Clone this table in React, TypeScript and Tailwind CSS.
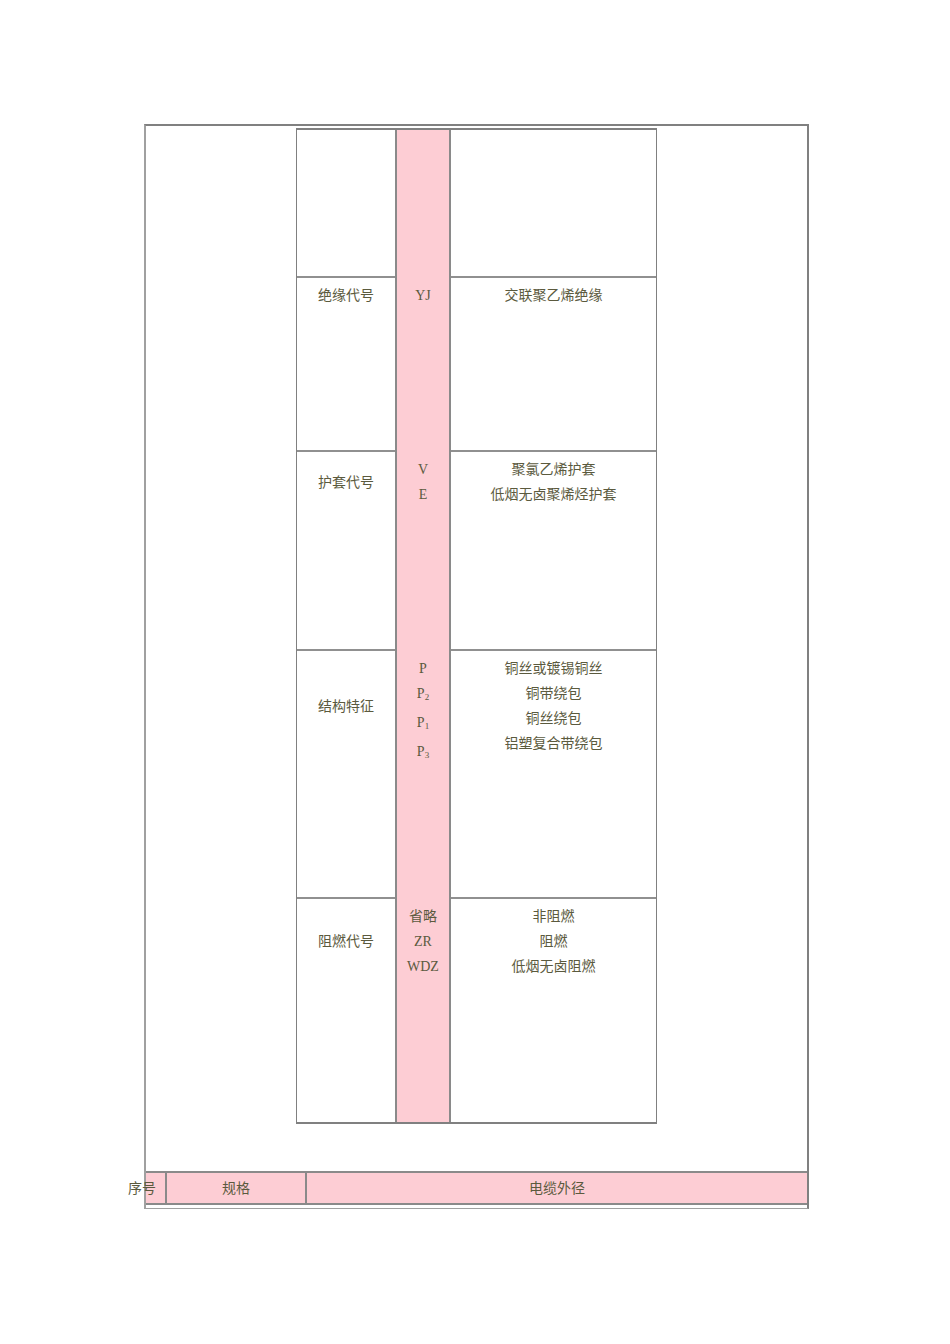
import React from "react";

const txt = "text-[#5b5a3e] text-[14px] leading-[25px]";
const font = { fontFamily: '"Liberation Serif", "Noto Sans CJK SC", serif' };

function Sub({ base, sub }: { base: string; sub: string }) {
  return (
    <span>
      {base}
      <span className="text-[9px] align-[-2px]">{sub}</span>
    </span>
  );
}

type Row = {
  h: string;
  label?: string;
  codes: React.ReactNode[];
  desc: string[];
  first?: boolean;
};

const rows: Row[] = [
  { h: "h-[146px]", codes: [], desc: [], first: true },
  { h: "h-[174px]", label: "绝缘代号", codes: ["YJ"], desc: ["交联聚乙烯绝缘"] },
  { h: "h-[199px]", label: "护套代号", codes: ["V", "E"], desc: ["聚氯乙烯护套", "低烟无卤聚烯烃护套"] },
  {
    h: "h-[248px]",
    label: "结构特征",
    codes: ["P", <Sub key="p2" base="P" sub="2" />, <Sub key="p1" base="P" sub="1" />, <Sub key="p3" base="P" sub="3" />],
    desc: ["铜丝或镀锡铜丝", "铜带绕包", "铜丝绕包", "铝塑复合带绕包"],
  },
  { h: "h-[225px]", label: "阻燃代号", codes: ["省略", "ZR", "WDZ"], desc: ["非阻燃", "阻燃", "低烟无卤阻燃"] },
];

export default function App() {
  return (
    <div className="w-[950px] h-[1344px] bg-white" style={font}>
      <div className="pt-[124px] pl-[144px]">
        <div className="w-[665px] h-[1085px] border-t-2 border-l-2 border-r-2 border-b border-t-[#808080] border-l-[#a0a0a0] border-r-[#808080] border-b-[#a0a0a0] flex flex-col">
          <div className="ml-[150px] mt-[2px] w-[361px] border border-[#808080] border-t-2 border-b-2 flex flex-col">
            {rows.map((r, i) => {
              const n = Math.max(r.codes.length, r.desc.length, 1);
              return (
                <div key={i} className={`flex ${r.h}`}>
                  <div className={`w-[98px] ${r.first ? "" : "border-t-2 border-[#909090]"} pt-[5px]`}>
                    {r.label && (
                      <div className={`flex items-center justify-center ${txt}`} style={{ height: n * 25 }}>
                        {r.label}
                      </div>
                    )}
                  </div>
                  <div className="w-[56px] bg-[#fdcdd4] border-l-2 border-r-2 border-[#8a8a8a] pt-[7px] flex flex-col items-center">
                    {r.codes.map((c, j) => (
                      <div key={j} className={txt}>
                        {c}
                      </div>
                    ))}
                  </div>
                  <div className={`flex-1 ${r.first ? "" : "border-t-2 border-[#909090]"} pt-[5px] flex flex-col items-center`}>
                    {r.desc.map((d, j) => (
                      <div key={j} className={txt}>
                        {d}
                      </div>
                    ))}
                  </div>
                </div>
              );
            })}
          </div>
          <div className="mt-[47px] h-[34px] bg-[#fdcdd4] border-t-2 border-b-2 border-[#8a8a8a] flex">
            <div className="w-[19px] flex items-center">
              <span className={`${txt} -ml-[18px] whitespace-nowrap`}>序号</span>
            </div>
            <div className="w-[140px] border-l-2 border-[#8a8a8a] flex items-center justify-center">
              <span className={txt}>规格</span>
            </div>
            <div className="flex-1 border-l-2 border-[#8a8a8a] flex items-center justify-center">
              <span className={txt}>电缆外径</span>
            </div>
          </div>
        </div>
      </div>
    </div>
  );
}
